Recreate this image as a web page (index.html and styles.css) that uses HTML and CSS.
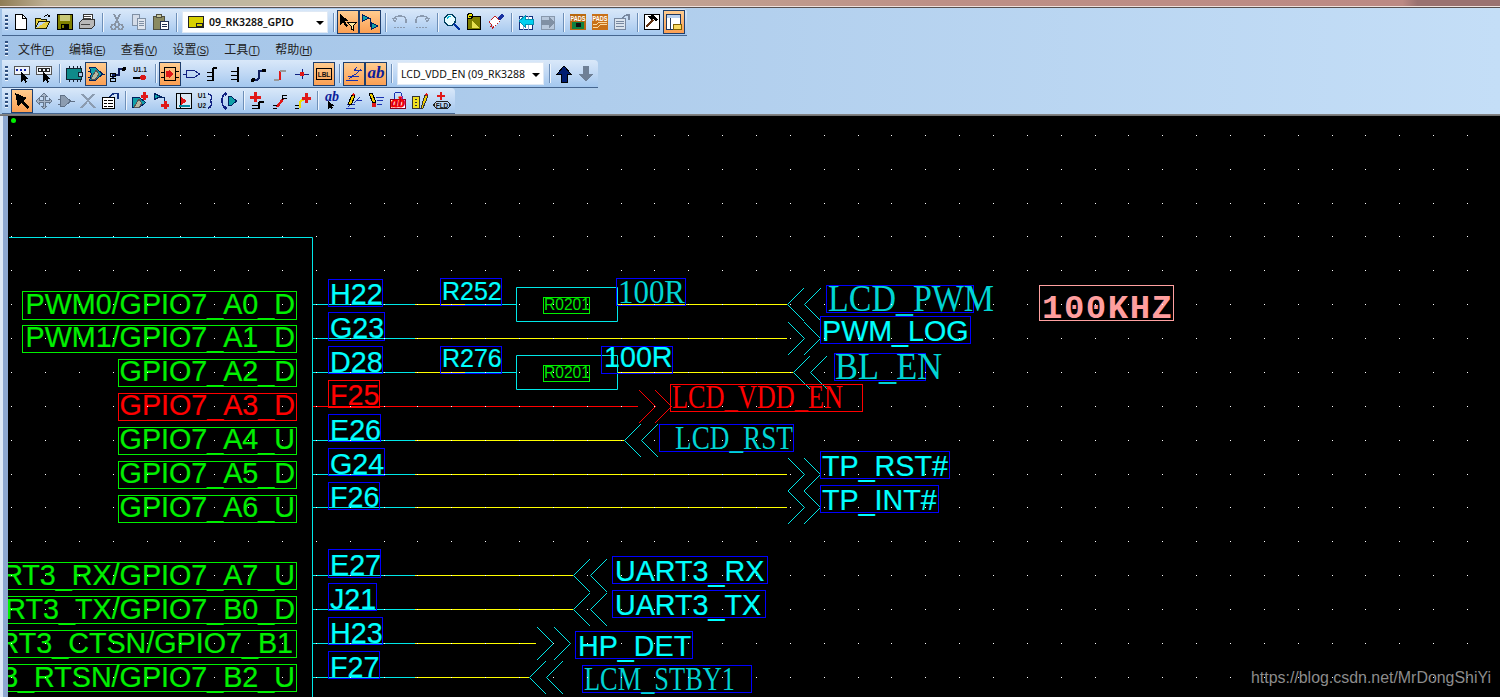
FILE: index.html
```html
<!DOCTYPE html>
<html lang="zh">
<head>
<meta charset="utf-8">
<title>PADS Logic</title>
<link rel="stylesheet" href="styles.css">
</head>
<body>
<header class="top">
  <div class="strip"></div>
  <div class="bars">
    <div class="bar bar-one">
      <span class="grip"></span>
      <span class="t"><svg class="ic" viewBox="0 0 18 18"><path d="M3.500 1.500h7l4 4v11h-11z" fill="#fff" stroke="#000"/><path d="M10.500 1.500v4h4" fill="none" stroke="#000"/></svg></span>
      <span class="t"><svg class="ic" viewBox="0 0 18 18"><path d="M1.500 15.500v-10h5l1 1h5v2h-8l-3 7h11l3-7h-3" fill="#e8d040" stroke="#202000"/><path d="M10 4c1-2 4-3 6-1" fill="none" stroke="#000"/><path d="M16 1v3h-3z" fill="#000"/></svg></span>
      <span class="t"><svg class="ic" viewBox="0 0 18 18"><rect x="1.500" y="1.500" width="15" height="15" fill="#808000" stroke="#000"/><rect x="4" y="2" width="10" height="6" fill="#c8c878"/><rect x="5" y="11" width="8" height="5" fill="#000"/><rect x="6" y="12" width="2" height="3" fill="#808000"/></svg></span>
      <span class="t"><svg class="ic" viewBox="0 0 18 18"><path d="M5.500 1.500h9v6h-9z" fill="#fff" stroke="#333"/><path d="M1.500 9.500l3-3h12v6l-3 3h-12z" fill="#b8b8b8" stroke="#333"/><path d="M3 12h9v-1H3zM6 3h7v1H6zM6 5h7v1H6z" fill="#444"/></svg></span>
      <span class="sep"></span>
      <span class="t"><svg class="ic" viewBox="0 0 18 18"><path d="M6 1l5 10M12 1L7 11" fill="none" stroke="#8894a4" stroke-width="1.500"/><circle cx="5.500" cy="14" r="2.500" fill="none" stroke="#8894a4" stroke-width="1.400"/><circle cx="12.500" cy="14" r="2.500" fill="none" stroke="#8894a4" stroke-width="1.400"/></svg></span>
      <span class="t"><svg class="ic" viewBox="0 0 18 18"><path d="M2.500 1.500h7v11h-7z" fill="#d4dce8" stroke="#8090a4"/><path d="M7.500 5.500h8v11h-8z" fill="#e0e6ee" stroke="#8090a4"/><path d="M9 8h5v1H9zM9 10h5v1H9zM9 12h5v1H9z" fill="#8090a4"/></svg></span>
      <span class="t"><svg class="ic" viewBox="0 0 18 18"><path d="M1.500 3.500h11v13h-11z" fill="#8a8a60" stroke="#505040"/><path d="M4.500 1.500h5v3h-5z" fill="#c8c8a0" stroke="#505040"/><path d="M8.500 8.500h8v8h-8z" fill="#fff" stroke="#203050"/><path d="M10 11h5v1h-5zM10 13h5v1h-5z" fill="#203050"/></svg></span>
      <span class="sep"></span>
      <div class="combo combo-a">
        <svg class="ic" viewBox="0 0 18 18"><path d="M1.500 3.500h15v11h-15z" fill="#d8d000" stroke="#222"/><path d="M9 10.500h6v3H9z" fill="#d8d000" stroke="#222"/></svg>
        <span class="combo-text strong">09_RK3288_GPIO</span>
        <span class="drop"></span>
      </div>
      <span class="sep"></span>
      <span class="t hl"><svg class="ic" viewBox="0 0 18 18"><path d="M1 1v11l3-3 3 5 2-1-3-5h4z" fill="#000"/><path d="M8.500 9.500h9l-3.500 3.500v4l-2-1v-3z" fill="#ffe9a0" stroke="#000"/></svg></span>
      <span class="t hl"><svg class="ic" viewBox="0 0 18 18"><path d="M1.500 1.500l6 3.500-6 3.500z" fill="#10a0a8" stroke="#002060"/><path d="M10.500 9.500l6 3.500-6 3.500z" fill="#10a0a8" stroke="#002060"/><path d="M7 5h2.500v8h1" fill="none" stroke="#002060"/></svg></span>
      <span class="sep"></span>
      <span class="t"><svg class="ic" viewBox="0 0 18 18"><path d="M3 6c2-4 10-4 12 0v4" fill="none" stroke="#8b9bb0" stroke-width="1.300"/><path d="M1 5h5l-2 4z" fill="none" stroke="#8b9bb0"/><path d="M3 14h12" stroke="#8b9bb0" stroke-dasharray="2 1"/></svg></span>
      <span class="t"><svg class="ic" viewBox="0 0 18 18"><path d="M15 6C13 2 5 2 3 6v4" fill="none" stroke="#8b9bb0" stroke-width="1.300"/><path d="M17 5h-5l2 4z" fill="none" stroke="#8b9bb0"/><path d="M3 14h12" stroke="#8b9bb0" stroke-dasharray="2 1"/></svg></span>
      <span class="sep"></span>
      <span class="t"><svg class="ic" viewBox="0 0 18 18"><circle cx="7" cy="7" r="5.500" fill="#e8fcff" stroke="#004060" stroke-width="1.400"/><path d="M4 6c1-2 2-3 4-3" stroke="#00b8d8" fill="none"/><path d="M11 11l6 6" stroke="#0030a0" stroke-width="2.500"/></svg></span>
      <span class="t"><svg class="ic" viewBox="0 0 18 18"><path d="M2.500 3.500h13v13h-13z" fill="#808000" stroke="#000" stroke-width="1.500"/><path d="M7 8l7 7H7z" fill="#e8e050"/><circle cx="5" cy="3" r="2.500" fill="#f0e800" stroke="#000"/><path d="M3.500 3h3" stroke="#000"/></svg></span>
      <span class="t"><svg class="ic" viewBox="0 0 18 18"><path d="M2 9l6-6 5 5-6 6z" fill="#fff" stroke="#c02020" stroke-dasharray="2 1"/><path d="M10 5l5-4 2 2-4 5z" fill="#1830a0"/><path d="M4 13l3 3" stroke="#c02020" stroke-width="2" stroke-dasharray="1 1"/></svg></span>
      <span class="sep"></span>
      <span class="t"><svg class="ic" viewBox="0 0 18 18"><path d="M2.500 3.500h13v13h-13z" fill="#fff" stroke="#103080"/><path d="M2 6h14M6 3v14M11 3v14" stroke="#90a8d0"/><path d="M2 8l6-5v3h8v5H8v3z" fill="#00d0f0" stroke="#0090b0"/></svg></span>
      <span class="t"><svg class="ic" viewBox="0 0 18 18"><path d="M2.500 3.500h13v13h-13z" fill="#b8c8dc" stroke="#8898ac"/><path d="M16 9l-6-5v3H2v5h8v3z" fill="#8090a4"/></svg></span>
      <span class="sep"></span>
      <span class="t"><svg class="ic" viewBox="0 0 18 18"><rect x="1" y="1" width="16" height="16" fill="#b86810"/><text x="1.500" y="7.500" class="mini pads" textLength="15" lengthAdjust="spacingAndGlyphs">PADS</text><rect x="3" y="9" width="12" height="7" fill="#108040"/><rect x="7" y="10" width="5" height="4" fill="#111"/></svg></span>
      <span class="t"><svg class="ic" viewBox="0 0 18 18"><rect x="1" y="1" width="16" height="16" fill="#c87018"/><text x="1.500" y="7.500" class="mini pads" textLength="15" lengthAdjust="spacingAndGlyphs">PADS</text><path d="M2 14h5l3-3h6M2 11h4l2-2h8" fill="none" stroke="#f8d8a0"/></svg></span>
      <span class="t"><svg class="ic" viewBox="0 0 18 18"><path d="M1.500 5.500h11v11h-11z" fill="#dbe4ee" stroke="#7888a0"/><path d="M3 8h8M3 10.500h8M3 13h8" stroke="#7888a0"/><path d="M10 5c1-3 3-3 6-3v5" fill="none" stroke="#7888a0" stroke-width="1.500"/></svg></span>
      <span class="sep"></span>
      <span class="t"><svg class="ic" viewBox="0 0 18 18"><rect x="1.500" y="1.500" width="15" height="15" fill="#fff" stroke="#000"/><path d="M3 14l7-7" stroke="#603010" stroke-width="2"/><path d="M5 3l6-1 4 5-2 1-3-2-2 1z" fill="#000"/></svg></span>
      <span class="t hl"><svg class="ic" viewBox="0 0 18 18"><path d="M1.500 1.500h14v15h-14z" fill="#fff" stroke="#203860"/><path d="M2 2h13v3H2z" fill="#b8d0f0"/><path d="M5.500 5v11" stroke="#203860"/><path d="M8.500 11.500h8v5h-8z" fill="#f8d860" stroke="#806000"/></svg></span>
    </div>

    <nav class="menubar">
      <span class="grip"></span>
      <span class="menu"><span class="mz">文件</span>(<u>F</u>)</span>
      <span class="menu"><span class="mz">编辑</span>(<u>E</u>)</span>
      <span class="menu"><span class="mz">查看</span>(<u>V</u>)</span>
      <span class="menu"><span class="mz">设置</span>(<u>S</u>)</span>
      <span class="menu"><span class="mz">工具</span>(<u>T</u>)</span>
      <span class="menu"><span class="mz">帮助</span>(<u>H</u>)</span>
    </nav>

    <div class="bar bar-three">
      <span class="grip"></span>
      <span class="t"><svg class="ic" viewBox="0 0 18 18"><rect x="1.500" y="1.500" width="15" height="8" fill="#eef3fa" stroke="#555"/><path d="M3 4l1 2 1-2M7 4l1 2 1-2M11 4l1 2 1-2" stroke="#1020a0" fill="none"/><path d="M8 7v10l2.500-2.500 2 3 1.500-1-2-3h3z" fill="#000"/></svg></span>
      <span class="t"><svg class="ic" viewBox="0 0 18 18"><rect x="1.500" y="1.500" width="15" height="8" fill="#eef3fa" stroke="#555"/><path d="M3.500 3.500h3v3h-3zM7.500 3.500h3v3h-3zM11.500 3.500h3v3h-3z" fill="none" stroke="#222"/><path d="M8 7v10l2.500-2.500 2 3 1.500-1-2-3h3z" fill="#000"/></svg></span>
      <span class="sep"></span>
      <span class="t"><svg class="ic" viewBox="0 0 18 18"><path d="M1.500 3.500h15v11h-15z" fill="#0f8a8a" stroke="#102030"/><path d="M4 1v2M8 1v2M12 1v2M15 1v2M4 15v2M8 15v2M12 15v2M15 15v2" stroke="#102030"/><path d="M13 7h4v4h-4z" fill="#a8c8ea" stroke="#102030"/></svg></span>
      <span class="t hl"><svg class="ic" viewBox="0 0 18 18"><path d="M2.500 2.500h6l7 6.500-7 6.500h-6c2-4 2-9 0-13z" fill="#10a0a8" stroke="#002060"/><path d="M1 6h3M1 12h3M15 9h3" stroke="#002060"/><path d="M4 14l5-9 3 4-4 6z" fill="#b8b8a0" stroke="#555"/></svg></span>
      <span class="t"><svg class="ic" viewBox="0 0 18 18"><path d="M4 14V9.500h6V4h5" fill="none" stroke="#102060" stroke-width="2"/><path d="M1 8h5v3H1zM1 13h5v3H1z" fill="none" stroke="#000"/><circle cx="15" cy="4" r="2" fill="#000"/></svg></span>
      <span class="t"><svg class="ic" viewBox="0 0 18 18"><text x="9" y="6.500" class="mini dark mid-anchor">U1.1</text><path d="M2 12.500h8" stroke="#000" stroke-width="2"/><circle cx="12" cy="12.500" r="3" fill="#d81818"/></svg></span>
      <span class="sep"></span>
      <span class="t hl"><svg class="ic" viewBox="0 0 18 18"><rect x="3.500" y="2.500" width="11" height="13" fill="none" stroke="#000"/><path d="M0 7h4M0 12h4M14 6h4M14 12h4" stroke="#000"/><path d="M5 6h3v-1l4 4-4 4v-1H5z" fill="#e01818"/></svg></span>
      <span class="t"><svg class="ic" viewBox="0 0 18 18"><path d="M0 9h3.500M3.500 5.500h8l5 3.500-5 3.500h-8z" fill="none" stroke="#102080"/></svg></span>
      <span class="t"><svg class="ic" viewBox="0 0 18 18"><path d="M12 3h-2a2 2 0 0 0-2 2v11" fill="none" stroke="#000" stroke-width="2.500"/><path d="M2 7h6M2 11h6M2 15h6" stroke="#000"/></svg></span>
      <span class="t"><svg class="ic" viewBox="0 0 18 18"><path d="M11 2v15" stroke="#000" stroke-width="2.500"/><path d="M4 6h7M4 10h7M4 14h7" stroke="#000"/></svg></span>
      <span class="t"><svg class="ic" viewBox="0 0 18 18"><path d="M5 15h3l2-2V6h5" fill="none" stroke="#102060" stroke-width="2"/><circle cx="15" cy="5.500" r="2" fill="#000"/><circle cx="4" cy="15" r="2" fill="#000"/></svg></span>
      <span class="t"><svg class="ic" viewBox="0 0 18 18"><path d="M3 15h5" stroke="#999" stroke-width="2"/><path d="M9 15V6" stroke="#e01818" stroke-width="2.500"/><path d="M9 6h6" stroke="#999" stroke-width="2"/></svg></span>
      <span class="t"><svg class="ic" viewBox="0 0 18 18"><path d="M2 9h14M9 4v10" stroke="#102080"/><circle cx="9" cy="9" r="2.200" fill="#e01818"/></svg></span>
      <span class="t hl"><svg class="ic" viewBox="0 0 18 18"><rect x="1.500" y="3.500" width="15" height="11" fill="none" stroke="#000"/><text x="9" y="11.500" class="mini dark mid-anchor">LBL</text></svg></span>
      <span class="sep"></span>
      <span class="t hl"><svg class="ic" viewBox="0 0 18 18"><path d="M1 15h12M3 11h11M10 10l6-6M4 14l6-5" fill="none" stroke="#1830b0"/><path d="M10 5h7M12 2l-3 4" fill="none" stroke="#1830b0"/></svg></span>
      <span class="t hl"><svg class="ic" viewBox="0 0 18 18"><text x="9" y="13" class="ab">ab</text></svg></span>
      <span class="sep"></span>
      <div class="combo combo-b">
        <span class="combo-text clip">LCD_VDD_EN (09_RK3288_GPIO)</span>
        <span class="drop"></span>
      </div>
      <span class="sep"></span>
      <span class="t"><svg class="ic" viewBox="0 0 18 18"><path d="M9 1l7 8h-4v8H6V9H2z" fill="#001c70" stroke="#000"/></svg></span>
      <span class="t"><svg class="ic" viewBox="0 0 18 18"><path d="M9 17l7-8h-4V1H6v8H2z" fill="#6f8096"/></svg></span>
    </div>

    <div class="bar bar-four">
      <span class="grip"></span>
      <span class="t hl"><svg class="ic" viewBox="0 0 18 18"><path d="M2 1l3 14 3-4 6 6 2-2-6-6 4-3z" fill="#000"/></svg></span>
      <span class="t"><svg class="ic" viewBox="0 0 18 18"><path d="M9 1l3 3h-2v4h4V6l3 3-3 3v-2h-4v4h2l-3 3-3-3h2v-4H4v2L1 9l3-3v2h4V4H6z" fill="#a8b6c8" stroke="#66788e"/></svg></span>
      <span class="t"><svg class="ic" viewBox="0 0 18 18"><path d="M3.500 3.500h4l6 5.500-6 5.500h-4z" fill="#8c9cb0" stroke="#5f7086"/><path d="M13 9h5M1 7h3M1 12h3" stroke="#5f7086"/></svg></span>
      <span class="t"><svg class="ic" viewBox="0 0 18 18"><path d="M3 2l13 14M15 2L2 16" stroke="#8c9cb0" stroke-width="2"/></svg></span>
      <span class="t"><svg class="ic" viewBox="0 0 18 18"><path d="M1.500 5.500h12v11h-12z" fill="#fff" stroke="#000"/><path d="M3 8h3M3 11h3M3 14h3M7 8h5M7 11h5M7 14h5" stroke="#000"/><path d="M9 5c1-3 4-4 8-3v5" fill="none" stroke="#103080" stroke-width="1.500"/></svg></span>
      <span class="sep"></span>
      <span class="t"><svg class="ic" viewBox="0 0 18 18"><path d="M1.500 5.500h7l6 5-6 5h-7z" fill="#10a0a8" stroke="#002060"/><path d="M3 15l5-8 3 4-3 5z" fill="#b8b8a0" stroke="#555"/><path d="M10 4h7M13.500 0v8" stroke="#e01818" stroke-width="3"/></svg></span>
      <span class="t"><svg class="ic" viewBox="0 0 18 18"><path d="M1.500 1.500l6 3-6 3z" fill="#10a0a8" stroke="#002060"/><path d="M7 5h4v4" fill="none" stroke="#002060"/><path d="M8 13h8M12 9v8" stroke="#e01818" stroke-width="3"/></svg></span>
      <span class="t"><svg class="ic" viewBox="0 0 18 18"><rect x="1.500" y="1.500" width="15" height="15" fill="#d8e8f4" stroke="#000"/><path d="M5.500 1v16" stroke="#000"/><path d="M6 5l6 4-6 4z" fill="#e01818"/><path d="M4 14h11" stroke="#0088a0" stroke-width="2"/></svg></span>
      <span class="t"><svg class="ic" viewBox="0 0 18 18"><text x="5" y="6" class="mini dark mid-anchor">U1</text><text x="5" y="16" class="mini dark mid-anchor">U2</text><path d="M11 2c4 1 5 4 2 7M13 9c3 2 2 6-2 7" fill="none" stroke="#102080" stroke-width="1.500"/></svg></span>
      <span class="t"><svg class="ic" viewBox="0 0 18 18"><path d="M9.500 4.500h3l5 4.500-5 4.500h-3z" fill="#10a0a8" stroke="#002060"/><path d="M6 2C2 4 2 13 6 16" fill="none" stroke="#102080" stroke-width="1.500"/><path d="M6 0l3 2-3 2zM6 14l3 2-3 2z" fill="#102080"/></svg></span>
      <span class="sep"></span>
      <span class="t"><svg class="ic" viewBox="0 0 18 18"><path d="M15 10h-3a2 2 0 0 0-2 2v5" fill="none" stroke="#000" stroke-width="2"/><path d="M3 13h7M3 16h7" stroke="#000"/><path d="M1 5h11M6.500 0v10" stroke="#e01818" stroke-width="3"/></svg></span>
      <span class="t"><svg class="ic" viewBox="0 0 18 18"><path d="M2 16h4M2 13h4" stroke="#000"/><path d="M6 15l6-8" stroke="#e01818" stroke-width="2.500"/><path d="M11 8V3h5M11 6h5" fill="none" stroke="#000"/></svg></span>
      <span class="t"><svg class="ic" viewBox="0 0 18 18"><path d="M2 16h4M2 13h4" stroke="#000"/><path d="M7 16v-5a3 3 0 0 1 3-3h1" fill="none" stroke="#f0e000" stroke-width="2.500"/><path d="M9 6h9M13.500 1v10" stroke="#e01818" stroke-width="3"/></svg></span>
      <span class="sep"></span>
      <span class="t"><svg class="ic" viewBox="0 0 18 18"><text x="9" y="9" class="ab small">ab</text><path d="M5 9v8l2-2 1 2 2-1-1-2h3z" fill="#000"/></svg></span>
      <span class="t"><svg class="ic" viewBox="0 0 18 18"><path d="M1 16h9M2 12h8M9 11l6-6M3 15l5-5M12 8h5" stroke="#1830b0" fill="none"/><path d="M3 12l4-9 3 1-4 9z" fill="#f0d000" stroke="#000"/><path d="M7 3l1-2 2 1-1 2z" fill="#e01818"/></svg></span>
      <span class="t"><svg class="ic" viewBox="0 0 18 18"><path d="M2 2l4 9 3-1-4-9z" fill="#f0d000" stroke="#000"/><circle cx="7" cy="13" r="2.500" fill="#e01818"/><path d="M9 5h8M10 8h6M10 12h5" stroke="#1830b0"/></svg></span>
      <span class="t"><svg class="ic" viewBox="0 0 18 18"><path d="M5 7V4a4 4 0 0 1 8 0v3" fill="none" stroke="#1830b0"/><rect x="1.500" y="7.500" width="15" height="9" fill="#fff" stroke="#800020"/><text x="9" y="15" class="ab small red">ab</text></svg></span>
      <span class="t"><svg class="ic" viewBox="0 0 18 18"><path d="M1.500 4.500h7v12h-7z" fill="#f0e020" stroke="#333"/><path d="M4 7h2M4 10h2M4 13h2" stroke="#333"/><path d="M10 16l4-13 3 1-5 12z" fill="#f0d000" stroke="#333"/><path d="M14 3l1-2 2 1-1 2z" fill="#e01818"/></svg></span>
      <span class="t"><svg class="ic" viewBox="0 0 18 18"><path d="M4 4h8M8 0v8" stroke="#e01818" stroke-width="2.200"/><path d="M3.500 9.500h11l3 3.500-3 3.500h-11L.5 13z" fill="none" stroke="#222"/><text x="9" y="15.500" class="mini dark mid-anchor">FLD</text></svg></span>
    </div>
  </div>
  <div class="rim"></div>
</header>

<main class="sheet">
  <div class="edge"></div>
  <svg class="canvas" viewBox="8 116 1492 581" width="1492" height="581">
    <circle cx="13.500" cy="120.500" r="2.500" class="dot-green"/>

    <g class="lines">
      <path class="cyan" d="M9 237.500H312.500V697M313 304.500H516M313 338.500H415M313 372.500H516M313 440.500H415M313 474.500H415M313 507.500H415M313 575.500H415M313 609.500H415M313 643.500H415M313 677.500H415"/>
      <path class="yellow" d="M415 304.500H465M617 304.500H787M415 338.500H787M415 372.500H465M617 372.500H793M415 440.500H624M415 474.500H787M415 507.500H787M415 575.500H573M415 609.500H573M415 643.500H536M415 677.500H529"/>
      <path class="red" d="M313 406.500H638"/>
      <path class="cyan" d="M516.500 287.500H617.500V321.500H516.500ZM516.500 355.500H617.500V389.500H516.500Z"/>
      <path class="cyan" d="M804 288L787.500 304.500 804 321M821 288L804.500 304.500 821 321"/>
      <path class="cyan" d="M788 322L804.500 338.500 788 355M804 322L820.500 338.500 804 355"/>
      <path class="cyan" d="M810 356L793.500 372.500 810 389M827 356L810.500 372.500 827 389"/>
      <path class="red" d="M639 390L655.500 406.500 639 423M655 390L671.500 406.500 655 423"/>
      <path class="cyan" d="M641 424L624.500 440.500 641 457M658 424L641.500 440.500 658 457"/>
      <path class="cyan" d="M788 458L804.500 474.500 788 491M804 458L820.500 474.500 804 491"/>
      <path class="cyan" d="M788 491L804.500 507.500 788 524M804 491L820.500 507.500 804 524"/>
      <path class="cyan" d="M590 559L573.500 575.500 590 592M607 559L590.500 575.500 607 592"/>
      <path class="cyan" d="M590 593L573.500 609.500 590 626M607 593L590.500 609.500 607 626"/>
      <path class="cyan" d="M537 627L553.500 643.500 537 660M554 627L570.500 643.500 554 660"/>
      <path class="cyan" d="M546 661L529.500 677.500 546 694M563 661L546.500 677.500 563 694"/>
    </g>

    <g class="frames green">
      <rect x="22.500" y="291.500" width="274" height="28"/>
      <rect x="22.500" y="325.500" width="274" height="27"/>
      <rect x="118.500" y="359.500" width="178" height="27"/>
      <rect x="118.500" y="427.500" width="178" height="27"/>
      <rect x="118.500" y="461.500" width="178" height="27"/>
      <rect x="118.500" y="495.500" width="178" height="27"/>
      <rect x="0.500" y="562.500" width="296" height="27"/>
      <rect x="0.500" y="596.500" width="296" height="27"/>
      <rect x="0.500" y="630.500" width="296" height="27"/>
      <rect x="0.500" y="664.500" width="296" height="27"/>
      <rect x="543.500" y="297.500" width="46" height="16"/>
      <rect x="543.500" y="365.500" width="46" height="16"/>
    </g>
    <g class="frames redline">
      <rect x="118.500" y="393.500" width="178" height="27"/>
      <rect x="328.500" y="380.500" width="51" height="27"/>
      <rect x="670.500" y="384.500" width="192" height="27"/>
    </g>
    <g class="frames blue">
      <rect x="328.500" y="279.500" width="54" height="27"/>
      <rect x="328.500" y="312.500" width="56" height="28"/>
      <rect x="328.500" y="346.500" width="54" height="27"/>
      <rect x="328.500" y="414.500" width="52" height="27"/>
      <rect x="328.500" y="448.500" width="56" height="27"/>
      <rect x="328.500" y="482.500" width="51" height="27"/>
      <rect x="328.500" y="549.500" width="52" height="28"/>
      <rect x="328.500" y="583.500" width="48" height="27"/>
      <rect x="328.500" y="617.500" width="54" height="27"/>
      <rect x="328.500" y="651.500" width="51" height="27"/>
      <rect x="440.500" y="278.500" width="61" height="27"/>
      <rect x="440.500" y="346.500" width="61" height="27"/>
      <rect x="616.500" y="278.500" width="69" height="27"/>
      <rect x="601.500" y="346.500" width="71" height="27"/>
      <rect x="826.500" y="285.500" width="147" height="27"/>
      <rect x="820.500" y="316.500" width="150" height="27"/>
      <rect x="834.500" y="353.500" width="91" height="27"/>
      <rect x="659.500" y="424.500" width="134" height="27"/>
      <rect x="820.500" y="451.500" width="129" height="27"/>
      <rect x="820.500" y="485.500" width="118" height="27"/>
      <rect x="612.500" y="556.500" width="155" height="27"/>
      <rect x="612.500" y="590.500" width="153" height="27"/>
      <rect x="575.500" y="631.500" width="117" height="27"/>
      <rect x="582.500" y="665.500" width="169" height="27"/>
    </g>
    <rect x="1039.500" y="285.500" width="134" height="35" class="pink-frame"/>

    <g class="sans green-text end">
      <text x="295" y="314">PWM0/GPIO7_A0_D</text>
      <text x="295" y="347">PWM1/GPIO7_A1_D</text>
      <text x="295" y="381">GPIO7_A2_D</text>
      <text x="295" y="449">GPIO7_A4_U</text>
      <text x="295" y="483">GPIO7_A5_D</text>
      <text x="295" y="517">GPIO7_A6_U</text>
      <text x="295" y="585">UART3_RX/GPIO7_A7_U</text>
      <text x="295" y="619">UART3_TX/GPIO7_B0_D</text>
      <text x="293" y="653">UART3_CTSN/GPIO7_B1</text>
      <text x="295" y="687">UART3_RTSN/GPIO7_B2_U</text>
    </g>
    <text x="295" y="415" class="sans red-text end">GPIO7_A3_D</text>

    <g class="sans cyan-text">
      <text x="330" y="304">H22</text>
      <text x="330" y="338">G23</text>
      <text x="330" y="372">D28</text>
      <text x="330" y="440">E26</text>
      <text x="330" y="474">G24</text>
      <text x="330" y="507">F26</text>
      <text x="330" y="575">E27</text>
      <text x="330" y="609">J21</text>
      <text x="330" y="643">H23</text>
      <text x="330" y="677">F27</text>
      <text x="604" y="367">100R</text>
      <text x="822" y="341">PWM_LOG</text>
      <text x="822" y="476">TP_RST#</text>
      <text x="822" y="510">TP_INT#</text>
      <text x="615" y="581">UART3_RX</text>
      <text x="615" y="615">UART3_TX</text>
      <text x="578" y="656">HP_DET</text>
    </g>
    <text x="330" y="405" class="sans red-text">F25</text>
    <text x="442" y="300" class="sans cyan-text mid">R252</text>
    <text x="442" y="367" class="sans cyan-text mid">R276</text>
    <text x="544" y="310" class="sans thin-green small-part">R0201</text>
    <text x="544" y="378" class="sans thin-green small-part">R0201</text>

    <g class="serif dim-cyan">
      <text x="618" y="303" textLength="67" lengthAdjust="spacingAndGlyphs">100R</text>
      <text x="828" y="311" class="tall" textLength="166" lengthAdjust="spacingAndGlyphs">LCD_PWM</text>
      <text x="835" y="379" class="tall" textLength="107" lengthAdjust="spacingAndGlyphs">BL_EN</text>
      <text x="675" y="449" textLength="118" lengthAdjust="spacingAndGlyphs">LCD_RST</text>
      <text x="584" y="690" textLength="151" lengthAdjust="spacingAndGlyphs">LCM_STBY1</text>
    </g>
    <text x="672" y="408" class="serif red-text" textLength="171" lengthAdjust="spacingAndGlyphs">LCD_VDD_EN</text>
    <text x="1042" y="318" class="khz" textLength="130" lengthAdjust="spacing">100KHZ</text>

    <g class="gridline">
      <path d="M11.150 135.500H1500M11.150 169.500H1500M11.150 203.500H1500M11.150 236.500H1500M11.150 270.500H1500M11.150 304.500H1500M11.150 338.500H1500M11.150 372.500H1500M11.150 406.500H1500M11.150 440.500H1500M11.150 474.500H1500M11.150 507.500H1500M11.150 541.500H1500M11.150 575.500H1500M11.150 609.500H1500M11.150 643.500H1500M11.150 677.500H1500"/>
    </g>

    <text x="1251" y="683" class="mark" textLength="240" lengthAdjust="spacingAndGlyphs">https://blog.csdn.net/MrDongShiYi</text>
  </svg>
</main>
</body>
</html>
```

FILE: styles.css
```css
* { box-sizing: border-box; }
html, body { margin: 0; padding: 0; }
body { width: 1500px; height: 697px; overflow: hidden; background: #000; font-family: "Liberation Sans", "Noto Sans CJK SC", sans-serif; }

.top { display: flex; flex-direction: column; height: 116px; }
.strip {
  height: 8px;
  border-bottom: 1px solid #565050;
  box-shadow: inset 0 -1px 0 #efe0dc;
  background: linear-gradient(90deg, #8f7c55 0, #bdae92 3%, #b7b6a0 10%, #c9b8a0 22%, #c2a594 42%, #bd9086 62%, #bc8a84 93.500%, #9a7270 94.500%, #9a7270 100%);
}
.bars {
  display: flex; flex-direction: column; height: 106px; padding-top: 1px;
  background: linear-gradient(90deg, #a2c3e7 0, #afcdec 40%, #c4def7 100%);
}
.rim { height: 2px; background: linear-gradient(#8a8a8a, #6a6a6a); }

.bar {
  display: flex; align-items: center; margin-left: 2px; padding-left: 3px;
  border-bottom: 1px solid #46668f; border-radius: 0 4px 0 0;
  background: linear-gradient(#d9e8f9 0, #c3daf5 45%, #a3c7ee 100%);
}
.bar-one { width: 685px; height: 27px; }
.bar-three { width: 596px; height: 28px; }
.bar-four { width: 453px; height: 26px; }
.grip {
  flex: none; width: 3px; height: 15px; margin-right: 2px;
  background: repeating-linear-gradient(#30507f 0 2px, #eef5fd 2px 3px, transparent 3px 4px);
}
.bar-three .grip, .bar-four .grip { margin-right: 3px; }
.t { flex: none; display: flex; align-items: center; justify-content: center; width: 22px; height: 24px; }
.hl { background: linear-gradient(#ffcc8f, #fb9f53); border: 1px solid #1f3f6d; }
.ic { display: block; width: 18px; height: 18px; shape-rendering: crispEdges; overflow: visible; }
.sep { flex: none; width: 8px; display: flex; justify-content: center; }
.sep::before { content: ""; width: 1px; height: 19px; background: #6d8fb8; box-shadow: 1px 0 0 #eef5fd; }

.combo {
  flex: none; display: flex; align-items: center; position: relative;
  background: #fff; border: 1px solid #dfe9f5; color: #111; font-family: "Noto Sans", sans-serif; font-size: 10.500px;
}
.combo-a { width: 146px; height: 22px; margin: 0 1px 0 2px; padding-left: 4px; gap: 4px; }
.combo-b { width: 147px; height: 23px; margin: 0 1px 0 2px; padding-left: 3px; }
.combo-text { white-space: nowrap; }
.strong { font-weight: 600; }
.clip { width: 124px; overflow: hidden; }
.drop {
  position: absolute; right: 3px; top: 50%; margin-top: -1px;
  border: 4px solid transparent; border-top: 4px solid #000; border-bottom: 0;
}

.menubar { display: flex; align-items: center; height: 24px; margin-left: 2px; padding-left: 3px; color: #222; font-size: 10px; letter-spacing: -0.4px; }
.menubar .grip { margin-right: 10px; }
.menu { margin-right: 15.500px; white-space: nowrap; }
.mz { font-size: 12px; letter-spacing: 0; }

.mini { font-family: "Liberation Sans", sans-serif; font-size: 6.500px; font-weight: 700; }
.mid-anchor { text-anchor: middle; }
.pads { fill: #fff; }
.dark { fill: #111; }
.ab { font-family: "Liberation Serif", serif; font-size: 17px; font-weight: 700; font-style: italic; fill: #0b1d9a; text-anchor: middle; }
.ab.small { font-size: 14px; }
.ab.red { fill: #900028; }

.sheet { display: flex; height: 581px; }
.edge { flex: none; width: 8px; background: linear-gradient(90deg, #dfe9f6 0 3px, #8ea8d0 3px 8px); }
.canvas { display: block; flex: none; background: #000; }
.dot-green { fill: #00f000; }

.lines path { fill: none; stroke-width: 1; }
.cyan { stroke: #00e8e8; }
.yellow { stroke: #ffff00; }
.red { stroke: #ff0000; }
.lines .yellow, .lines .red { shape-rendering: crispEdges; }

.frames rect { fill: none; shape-rendering: crispEdges; }
.green rect { stroke: #00f000; }
.redline rect { stroke: #ff0000; }
.blue rect { stroke: #0000ff; }
.pink-frame { fill: none; stroke: #ffa0a0; shape-rendering: crispEdges; }

.sans { font-family: "Liberation Sans", sans-serif; font-size: 28.700px; stroke-width: 0.2px; }
.serif { font-family: "Liberation Serif", serif; font-size: 33px; }
.tall { font-size: 37px; }
.green-text { fill: #00f000; stroke: #00f000; }
.cyan-text { fill: #00ffff; stroke: #00ffff; }
.red-text { fill: #ff0000; }
.sans.red-text { stroke: #ff0000; }
.dim-cyan { fill: #00d4d4; }
.end { text-anchor: end; }
.mid { font-size: 25px; }
.small-part { font-size: 15.600px; stroke-width: 0; }
.thin-green { fill: #00e800; }
.khz { font-family: "Liberation Mono", monospace; font-weight: 700; font-size: 34px; fill: #ff9e9e; }
.mark { font-family: "Liberation Sans", sans-serif; font-size: 16px; fill: #8c8c8c; }
.gridline path { fill: none; stroke: #fff; stroke-width: 1; stroke-dasharray: 1 32.857; shape-rendering: crispEdges; }
```
